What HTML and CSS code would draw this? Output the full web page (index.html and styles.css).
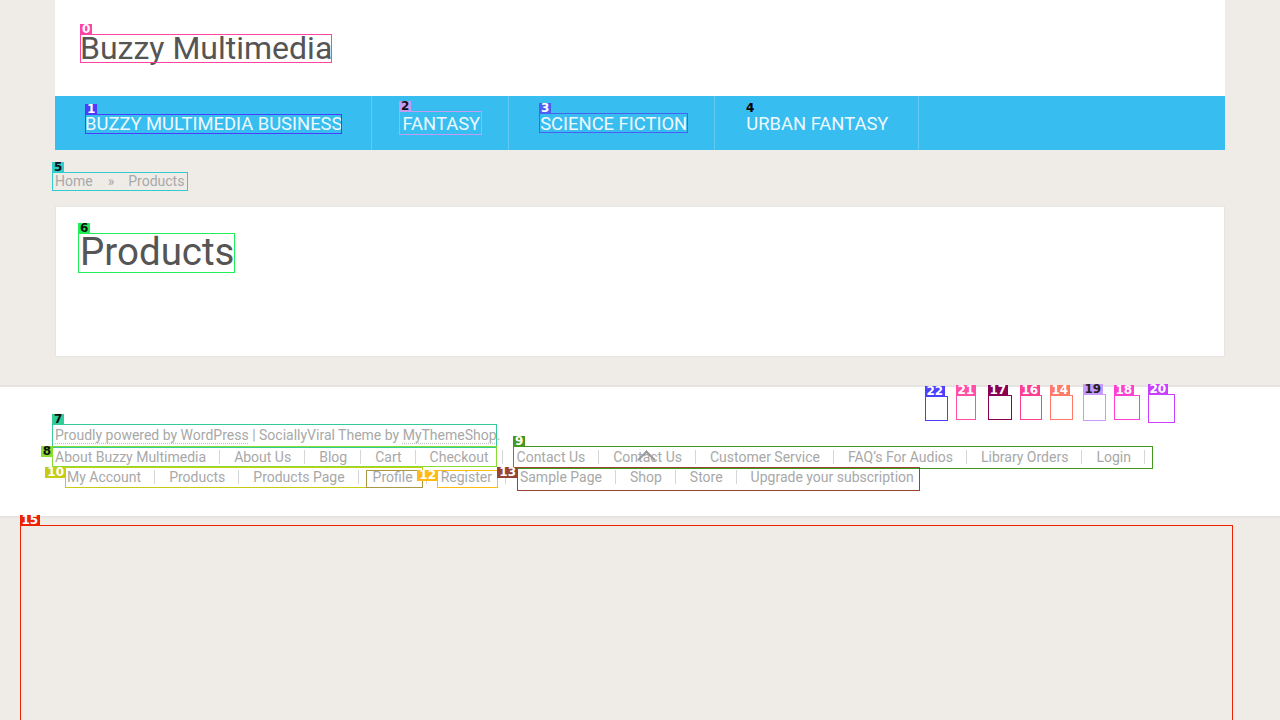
FILE: index.html
```html
<!DOCTYPE html>
<html lang="en">
<head>
<meta charset="utf-8">
<title>Products – Buzzy Multimedia</title>
<link rel="stylesheet" href="styles.css">
</head>
<body>
<div class="container">
  <header class="site-header">
    <h1 class="site-title">Buzzy Multimedia</h1>
  </header>
  <nav class="main-nav">
    <a class="nav-item" href="#">BUZZY MULTIMEDIA BUSINESS</a>
    <a class="nav-item" href="#">FANTASY</a>
    <a class="nav-item" href="#">SCIENCE FICTION</a>
    <a class="nav-item" href="#">URBAN FANTASY</a>
  </nav>
  <div class="breadcrumb"><span>Home</span><span class="sep">»</span><span>Products</span></div>
  <article class="card">
    <h2 class="page-title">Products</h2>
  </article>
</div>
<footer class="site-footer">
  <div class="container">
    <div class="social">
      <span class="soc s22"><b>22</b></span>
      <span class="soc s21"><b>21</b></span>
      <span class="soc s17"><b>17</b></span>
      <span class="soc s16"><b>16</b></span>
      <span class="soc s14"><b>14</b></span>
      <span class="soc s19"><b>19</b></span>
      <span class="soc s18"><b>18</b></span>
      <span class="soc s20"><b>20</b></span>
    </div>
    <p class="copyright"><a href="#">Proudly powered by WordPress</a> | SociallyViral Theme by <a href="#">MyThemeShop</a>.</p>
    <ul class="fmenu">
      <li>About Buzzy Multimedia</li><li>About Us</li><li>Blog</li><li>Cart</li><li>Checkout</li><li>Contact Us</li><li>Contact Us</li><li>Customer Service</li><li>FAQ’s For Audios</li><li>Library Orders</li><li>Login</li>
    </ul>
    <ul class="fmenu second">
      <li>My Account</li><li>Products</li><li>Products Page</li><li>Profile</li><li>Register</li><li>Sample Page</li><li>Shop</li><li>Store</li><li class="last">Upgrade your subscription</li>
    </ul>
  </div>
  <span class="to-top"></span>
</footer>

<div class="marks">
  <div class="mk m0"><b>0</b></div>
  <div class="mk m1"><b>1</b></div>
  <div class="mk m2"><b>2</b></div>
  <div class="mk m3"><b>3</b></div>
  <div class="mk m4"><b>4</b></div>
  <div class="mk m5"><b>5</b></div>
  <div class="mk m6"><b>6</b></div>
  <div class="mk m7"><b>7</b></div>
  <div class="mk side m8"><b>8</b></div>
  <div class="mk m9"><b>9</b></div>
  <div class="mk side m10"><b>10</b></div>
  <div class="mk m11"></div>
  <div class="mk side m12"><b>12</b></div>
  <div class="mk side m13"><b>13</b></div>
  <div class="mk m15"><b>15</b></div>
</div>
</body>
</html>
```
FILE: styles.css
```css
html, body { margin: 0; padding: 0; }
body {
  background: #efece8;
  font-family: Roboto, "Liberation Sans", sans-serif;
  color: #555;
  height: 720px;
  overflow: hidden;
  position: relative;
}
.container { width: 1170px; margin: 0 auto; }

.site-header {
  background: #fff;
  height: 96px;
  padding: 34px 25px 0;
  box-sizing: border-box;
}
.site-title {
  margin: 0;
  font-size: 32px;
  line-height: 29px;
  font-weight: 400;
  color: #555;
}

.main-nav {
  background: #38bdf0;
  height: 54px;
  display: flex;
  align-items: center;
}
.nav-item {
  display: flex;
  align-items: center;
  height: 100%;
  padding: 1px 29px 0 30px;
  border-right: 1px solid rgba(255,255,255,0.22);
  color: #eef9ff;
  text-decoration: none;
  font-size: 18.4px;
  line-height: 18px;
  box-sizing: border-box;
}
.nav-item:nth-child(2) { padding-right: 28px; }
.nav-item:nth-child(3) { padding-left: 31px; padding-right: 27px; }
.nav-item:nth-child(4) { padding-left: 31px; padding-right: 30px; }

.breadcrumb {
  margin-top: 22px;
  height: 19px;
  font-size: 14px;
  line-height: 19px;
  color: #a8a8a8;
  display: flex;
}
.breadcrumb .sep { padding: 0 14px 0 15px; }

.card {
  margin-top: 15px;
  height: 151px;
  background: #fff;
  border: 1px solid #e7e5e1;
  box-sizing: border-box;
  padding: 25px 24px;
}
.page-title {
  margin: 0;
  font-size: 38.5px;
  line-height: 40px;
  font-weight: 400;
  color: #555;
}

.site-footer {
  margin-top: 28px;
  background: #fff;
  border-top: 2px solid #e6e4e0;
  border-bottom: 2px solid #e6e4e0;
  height: 133px;
  box-sizing: border-box;
  position: relative;
}
.social {
  display: flex;
  justify-content: flex-end;
  gap: 8px;
  padding: 7px 50px 0 0;
  height: 30px;
  box-sizing: border-box;
  align-items: flex-start;
}
.soc {
  width: 23px;
  height: 25px;
  border: 1.5px solid;
  box-sizing: border-box;
  position: relative;
  margin-top: 1px;
}
.soc b {
  position: absolute;
  left: -1.5px;
  bottom: 100%;
  font: bold 12px/11px "DejaVu Sans", sans-serif;
  padding: 0 2px;
  color: #fff;
}
.s22 { border-color: #4a40ff; width: 23px; margin-top: 2px; } .s22 b { background: #4a40ff; }
.s21 { border-color: #ff4fa6; width: 20px; margin-right: 4px; } .s21 b { background: #ff4fa6; }
.s17 { border-color: #8a0050; width: 24px; } .s17 b { background: #8a0050; }
.s16 { border-color: #ff3f8f; width: 22px; } .s16 b { background: #ff3f8f; }
.s14 { border-color: #ff7a66; width: 23px; margin-right: 2px; } .s14 b { background: #ff7a66; }
.s19 { border-color: #c89bff; height: 27px; margin-top: 0; } .s19 b { background: #c89bff; color: #222; }
.s18 { border-color: #ff3fcf; width: 26px; } .s18 b { background: #ff3fcf; }
.s20 { border-color: #c93fff; width: 27px; height: 29px; margin-top: 0; } .s20 b { background: #c93fff; }

.copyright {
  margin: 0;
  font-size: 14px;
  line-height: 21px;
  color: #a8a8a8;
  padding-top: 8px;
}
.copyright a {
  color: #a8a8a8;
  text-decoration: underline dotted #c8c8c8;
  text-underline-offset: 3px;
}
.fmenu {
  list-style: none;
  margin: 0;
  padding: 0;
  display: flex;
  font-size: 14px;
  color: #a8a8a8;
}
.fmenu li {
  padding-right: 13px;
  margin-right: 14px;
  border-right: 1px solid #d6d6d6;
  height: 14px;
  line-height: 14px;
  margin-top: 4px;
  margin-bottom: 3px;
}
.fmenu.second { padding-left: 12px; }
.fmenu.second li { margin-top: 3px; }
.fmenu li.last { border-right: 0; }

.to-top {
  position: absolute;
  left: 640px;
  top: 66px;
  width: 11px;
  height: 11px;
  border-left: 2.5px solid #9a9a9a;
  border-top: 2.5px solid #9a9a9a;
  transform: rotate(45deg);
}

/* annotation overlay */
.marks { position: absolute; left: 0; top: 0; width: 0; height: 0; }
.mk {
  position: absolute;
  border: 1px solid;
  box-sizing: border-box;
}
.mk b {
  position: absolute;
  left: -1px;
  bottom: 100%;
  font: bold 12px/11px "DejaVu Sans", sans-serif;
  padding: 0 2px;
  color: #fff;
}
.mk.side b { bottom: auto; left: auto; right: 100%; top: -1px; }
.m0 { left: 80px; top: 34px; width: 252px; height: 29px; border-color: #ff44a4; } .m0 b { background: #ff44a4; }
.m1 { left: 85px; top: 114px; width: 257px; height: 20px; border-color: #4b3cff; } .m1 b { background: #4b3cff; }
.m2 { left: 399px; top: 111px; width: 83px; height: 24px; border-color: #c39cf5; } .m2 b { background: #c39cf5; color: #111; }
.m3 { left: 539px; top: 113px; width: 149px; height: 20px; border-color: #4b60f0; } .m3 b { background: #4b60f0; }
.m4 { left: 746px; top: 114px; width: 0; height: 0; border: 0; } .m4 b { color: #000; background: transparent; left: 0; padding: 0; }
.m5 { left: 52px; top: 172px; width: 136px; height: 19px; border-color: #33cccc; } .m5 b { background: #33cccc; color: #111; }
.m6 { left: 78px; top: 233px; width: 157px; height: 40px; border-color: #22ee55; } .m6 b { background: #22ee55; color: #111; }
.m7 { left: 52px; top: 424px; width: 445px; height: 24px; border-color: #33cc99; } .m7 b { background: #33cc99; color: #111; }
.m8 { left: 52px; top: 446px; width: 445px; height: 21px; border-color: #88dd33; } .m8 b { background: #88dd33; color: #111; }
.m9 { left: 513px; top: 446px; width: 640px; height: 23px; border-color: #449922; } .m9 b { background: #449922; }
.m10 { left: 65px; top: 467px; width: 358px; height: 21px; border-color: #c8cc11; } .m10 b { background: #c8cc11; top: 2px; }
.m11 { left: 366px; top: 470px; width: 57px; height: 18px; border-color: #aa9944; }
.m12 { left: 437px; top: 470px; width: 61px; height: 18px; border-color: #ffbb11; } .m12 b { background: #ffbb11; }
.m13 { left: 517px; top: 467px; width: 403px; height: 24px; border-color: #994433; } .m13 b { background: #994433; top: 0; }
.m15 { left: 20px; top: 525px; width: 1213px; height: 195px; border-color: #ee2200; border-width: 1.5px 1.5px 0; } .m15 b { background: #ee2200; left: -1.5px; }
```
